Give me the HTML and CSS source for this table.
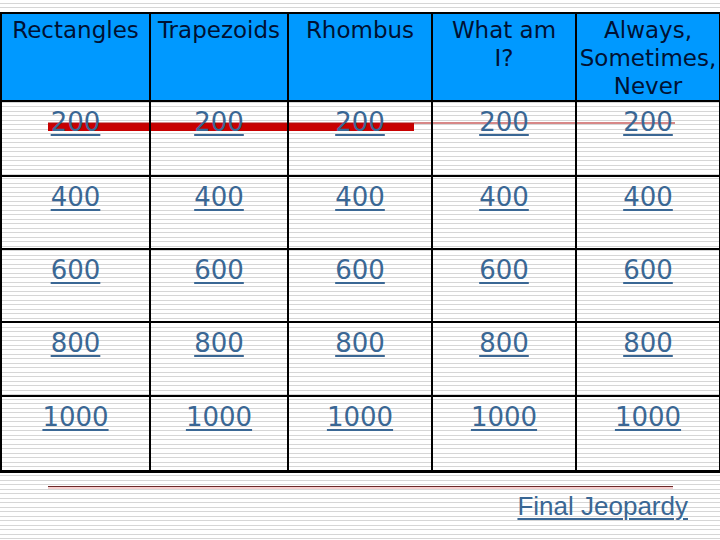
FILE: index.html
```html
<!DOCTYPE html>
<html>
<head>
<meta charset="utf-8">
<link rel="stylesheet" href="styles.css">
</head>
<body>
<div class="slide">
  <svg class="strike" width="720" height="140" viewBox="0 0 720 140">
    <rect x="48" y="123" width="366" height="8" fill="#c80000"/>
    <rect x="48" y="122.5" width="627" height="1" fill="#b01010"/>
  </svg>

  <div class="board">
    <div class="cell head">Rectangles</div>
    <div class="cell head">Trapezoids</div>
    <div class="cell head">Rhombus</div>
    <div class="cell head">What am<br>I?</div>
    <div class="cell head">Always, Sometimes, Never</div>

    <div class="cell"><a class="val" href="#">200</a></div>
    <div class="cell"><a class="val" href="#">200</a></div>
    <div class="cell"><a class="val" href="#">200</a></div>
    <div class="cell"><a class="val" href="#">200</a></div>
    <div class="cell"><a class="val" href="#">200</a></div>

    <div class="cell"><a class="val" href="#">400</a></div>
    <div class="cell"><a class="val" href="#">400</a></div>
    <div class="cell"><a class="val" href="#">400</a></div>
    <div class="cell"><a class="val" href="#">400</a></div>
    <div class="cell"><a class="val" href="#">400</a></div>

    <div class="cell"><a class="val" href="#">600</a></div>
    <div class="cell"><a class="val" href="#">600</a></div>
    <div class="cell"><a class="val" href="#">600</a></div>
    <div class="cell"><a class="val" href="#">600</a></div>
    <div class="cell"><a class="val" href="#">600</a></div>

    <div class="cell"><a class="val" href="#">800</a></div>
    <div class="cell"><a class="val" href="#">800</a></div>
    <div class="cell"><a class="val" href="#">800</a></div>
    <div class="cell"><a class="val" href="#">800</a></div>
    <div class="cell"><a class="val" href="#">800</a></div>

    <div class="cell"><a class="val" href="#">1000</a></div>
    <div class="cell"><a class="val" href="#">1000</a></div>
    <div class="cell"><a class="val" href="#">1000</a></div>
    <div class="cell"><a class="val" href="#">1000</a></div>
    <div class="cell"><a class="val" href="#">1000</a></div>
  </div>

  <div class="footer">
    <div class="rule"></div>
    <div class="final-row"><a class="final" href="#">Final Jeopardy</a></div>
  </div>
</div>
</body>
</html>
```

FILE: styles.css
```css
html, body {
  margin: 0;
  padding: 0;
}

body {
  width: 720px;
  height: 540px;
  overflow: hidden;
  background-color: #ffffff;
  background-image: linear-gradient(to bottom,
    #ffffff 0, #ffffff 3px,
    #d6d6d6 3px, #d6d6d6 4.5px,
    #ffffff 4.5px, #ffffff 7px,
    #d6d6d6 7px, #d6d6d6 8.5px,
    #ffffff 8.5px);
  background-size: 100% 9px;
  font-family: "DejaVu Sans", Verdana, sans-serif;
}

.slide {
  position: relative;
  width: 720px;
  height: 540px;
  overflow: hidden;
  padding-top: 12px;
  box-sizing: border-box;
}

.board {
  position: relative;
  z-index: 1;
  display: grid;
  width: 721px;
  grid-template-columns: 149px 138px 144px 144px 144px;
  grid-template-rows: 88px 75px 73px 73px 74px 73px;
  border-left: 2px solid #000;
  border-top: 2px solid #000;
  border-bottom: 3px solid #000;
}

.cell {
  box-sizing: border-box;
  border-right: 2px solid #000;
  border-bottom: 2px solid #000;
  text-align: center;
  padding-top: 5px;
}

.board > .cell:nth-last-child(-n+5) {
  border-bottom: 0;
}

.head {
  background: #0099ff;
  color: #001133;
  font-size: 23px;
  line-height: 28px;
  padding-top: 2px;
}

.val {
  color: #3a6794;
  font-size: 26px;
  line-height: 30px;
  text-decoration: underline;
  text-decoration-thickness: 2px;
  text-underline-offset: 3px;
}

.footer {
  padding-top: 13px;
}

.rule {
  margin-left: 48px;
  width: 625px;
  height: 1px;
  background: #6e2a2a;
  border-bottom: 2px solid #f6d0d0;
}

.final-row {
  display: flex;
  justify-content: flex-end;
  padding-right: 32px;
  margin-top: 2px;
}

.final {
  font-family: "Liberation Sans", Arial, sans-serif;
  font-size: 26px;
  line-height: 30px;
  color: #3a6794;
  text-decoration: underline;
  text-decoration-thickness: 2px;
  text-underline-offset: 3px;
}

.strike {
  position: absolute;
  left: 0;
  top: 0;
  z-index: 0;
  pointer-events: none;
}
```
